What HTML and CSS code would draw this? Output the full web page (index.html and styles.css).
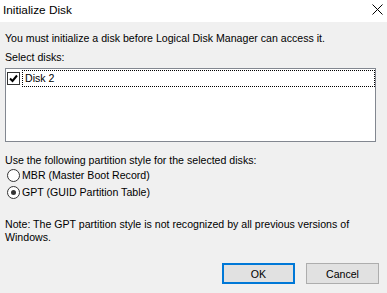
FILE: index.html
```html
<!DOCTYPE html>
<html lang="en">
<head>
    <meta charset="UTF-8">
    <title>Initialize Disk</title>
    <link rel="stylesheet" href="styles.css">
</head>
<body>
    <div class="window">
        <div class="titlebar">
            <span class="title">Initialize Disk</span>
            <svg class="close" width="11" height="11" viewBox="0 0 11 11">
                <path d="M0.5 0.5 L10.5 10.5 M10.5 0.5 L0.5 10.5" stroke="#000" stroke-width="1" fill="none"/>
            </svg>
        </div>

        <div class="dialog">
            <p class="intro">You must initialize a disk before Logical Disk Manager can access it.</p>
            <p class="label">Select disks:</p>

            <div class="listbox">
                <div class="item">
                    <span class="check">
                        <svg width="9" height="9" viewBox="0 0 9 9">
                            <path d="M1 4.5 L3.5 7 L8 1.5" stroke="#000" stroke-width="2" fill="none"/>
                        </svg>
                    </span>
                    <span class="item-text">Disk 2</span>
                </div>
            </div>

            <p class="label style-label">Use the following partition style for the selected disks:</p>
            <div class="radio"><span class="dot"></span>MBR (Master Boot Record)</div>
            <div class="radio"><span class="dot on"></span>GPT (GUID Partition Table)</div>

            <p class="note">Note: The GPT partition style is not recognized by all previous versions of<br>Windows.</p>

            <div class="buttons">
                <button class="btn default">OK</button>
                <button class="btn">Cancel</button>
            </div>
        </div>
    </div>
</body>
</html>
```

FILE: styles.css
```css
body { margin: 0; font-family: "Liberation Sans", Arial, sans-serif; font-size: 10.6px; color: #000; }
.window { width: 387px; height: 293px; background: #f0f0f0; overflow: hidden; }

.titlebar { height: 22px; background: #fff; display: flex; align-items: center; justify-content: space-between; padding: 0 4px 0 3px; }
.title { font-size: 11.8px; margin-top: -3px; }
.close { margin-top: -3px; }

.dialog { padding: 10px 8px 0 5px; }
.dialog p { margin: 0; line-height: 13px; white-space: nowrap; }
.label { margin-top: 6px !important; }
.style-label { margin-top: 12px !important; }

.listbox { margin: 4px 3px 0 0; height: 71px; background: #fff; border: 1px solid #828790; padding: 1px 0 0 1px; }
.item { display: flex; align-items: center; height: 17px; }
.check { width: 11px; height: 11px; border: 1px solid #333; margin: 0 2px 0 0; display: flex; align-items: center; justify-content: center; background: #fff; }
.item-text { flex: 1; height: 15px; line-height: 15px; padding-left: 2px; border: 1px dotted #000; }

.radio { display: flex; align-items: center; height: 17px; line-height: 13px; padding-left: 2px; }
.radio:first-of-type { margin-top: 4px; }
.dot { width: 11px; height: 11px; border: 1px solid #333; border-radius: 50%; margin-right: 2px; background: #fff; position: relative; }
.dot.on::after { content: ""; position: absolute; left: 3px; top: 3px; width: 5px; height: 5px; border-radius: 50%; background: #333; }

.note { margin-top: 17px !important; }

.buttons { display: flex; justify-content: flex-end; gap: 11px; margin-top: 19px; }
.btn { width: 73px; height: 21px; background: #e1e1e1; border: 1px solid #adadad; font-family: inherit; font-size: 10.6px; color: #000; padding: 0; }
.btn.default { border: 2px solid #0078d7; }
```
